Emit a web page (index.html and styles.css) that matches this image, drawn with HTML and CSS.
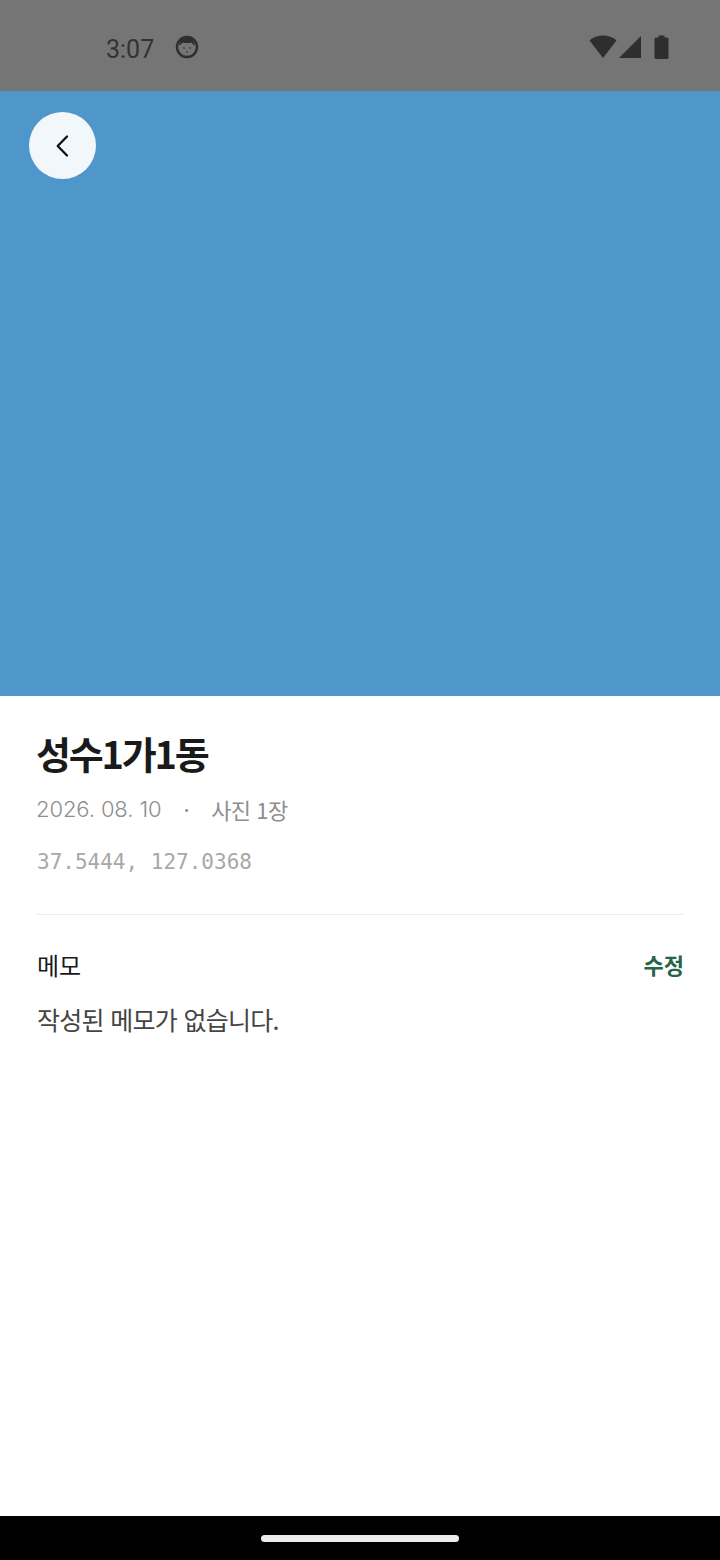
FILE: index.html
```html
<!DOCTYPE html>
<html lang="ko">
<head>
<meta charset="utf-8">
<title>성수1가1동</title>
<link rel="stylesheet" href="styles.css">
</head>
<body>
<div class="screen">
  <header class="status">
    <div class="status-left">
      <span class="clock">3:07</span>
      <svg class="app-icon" width="24" height="24" viewBox="0 0 24 24">
        <circle cx="12" cy="12" r="10" fill="none" stroke="#2e2e2e" stroke-width="2.4"/>
        <path d="M4 10.500C5 5 8 2.500 12 2.500s7 2.500 8 8c-2-.5-3-2.500-4-3-1 .7-7 .7-8 0-1 .5-2 2.500-4 3z" fill="#2e2e2e"/>
        <circle cx="9" cy="13" r="1" fill="#444"/>
        <circle cx="15" cy="13" r="1" fill="#444"/>
        <circle cx="12" cy="17" r="1" fill="#444"/>
      </svg>
    </div>
    <div class="status-right">
      <svg width="28" height="24" viewBox="0 0 28 24"><path d="M.5 5.500C4 2 9 .5 14 .5s10 1.500 13.500 5L14 23z" fill="#2e2e2e"/></svg>
      <svg width="24" height="24" viewBox="0 0 24 24"><path d="M1 23 23 1v22z" fill="#2e2e2e"/></svg>
      <svg class="battery" width="16" height="24" viewBox="0 0 16 24"><path d="M4.500 2.500V.5h6v2H13A1.500 1.500 0 0 1 14.500 4v18.500A1.500 1.500 0 0 1 13 24H2A1.500 1.500 0 0 1 .5 22.500V4A1.500 1.500 0 0 1 2 2.500z" fill="#2e2e2e"/></svg>
    </div>
  </header>

  <section class="hero">
    <button class="back" type="button" aria-label="뒤로">
      <svg width="24" height="24" viewBox="0 0 24 24"><path d="M16 2.500 6.700 12l9.300 9.500" fill="none" stroke="#111" stroke-width="2.300" stroke-linecap="round" stroke-linejoin="round"/></svg>
    </button>
  </section>

  <main class="detail">
    <h1 class="title">성수1가1동</h1>
    <div class="meta">
      <span class="date">2026. 08. 10</span>
      <span class="dot">·</span>
      <span>사진 1장</span>
    </div>
    <div class="coords">37.5444, 127.0368</div>
    <hr class="rule">
    <div class="memo-head">
      <span class="memo-label">메모</span>
      <span class="memo-edit">수정</span>
    </div>
    <p class="memo-body">작성된 메모가 없습니다.</p>
  </main>

  <footer class="nav">
    <div class="handle"></div>
  </footer>
</div>
</body>
</html>
```

FILE: styles.css
```css
* { box-sizing: border-box; }
html, body { margin: 0; padding: 0; }
body {
  width: 720px;
  height: 1560px;
  overflow: hidden;
  background: #fff;
  font-family: "Noto Sans CJK KR", "Noto Sans", sans-serif;
}
.screen {
  display: flex;
  flex-direction: column;
  height: 1560px;
}
.status {
  flex: 0 0 91px;
  background: #757575;
  display: flex;
  align-items: center;
  justify-content: space-between;
  padding: 3px 50px 0 106px;
}
.status-left, .status-right { display: flex; align-items: center; }
.status-left { gap: 21px; }
.status-right { gap: 1px; }
.clock {
  padding-top: 6px;
  font-family: Roboto, sans-serif;
  font-size: 25px;
  color: #333;
  line-height: 28px;
}
.battery { margin-left: 11px; }
.hero {
  flex: 0 0 605px;
  background: #4f96ca;
  padding: 21px 0 0 29px;
}
.back {
  display: flex;
  align-items: center;
  justify-content: center;
  width: 67px;
  height: 67px;
  padding: 0;
  border: 0;
  border-radius: 50%;
  background: #f2f7fb;
}
.detail {
  flex: 1;
  padding: 30px 36px 0;
}
.title {
  margin: 0;
  font-size: 38px;
  font-weight: 700;
  line-height: 54px;
  letter-spacing: -2.2px;
  color: #1a1a1a;
}
.meta {
  display: flex;
  align-items: center;
  margin-top: 13px;
  font-size: 22px;
  line-height: 32px;
  letter-spacing: -.5px;
  color: #8e8e8e;
}
.date {
  font-family: Inter, sans-serif;
  font-weight: 300;
  font-size: 22px;
  letter-spacing: -.1px;
}
.dot { margin: 0 22px; }
.coords {
  margin-top: 23px;
  padding-left: 1px;
  font-family: "DejaVu Sans Mono", monospace;
  font-size: 21px;
  line-height: 28px;
  color: #a8a8a8;
}
.rule {
  margin: 38px 0 0;
  border: 0;
  height: 1px;
  background: #ececec;
}
.memo-head {
  display: flex;
  align-items: center;
  justify-content: space-between;
  margin-top: 31px;
  padding-left: 1px;
  line-height: 34px;
}
.memo-label { padding-top: 2px; font-size: 24px; color: #1a1a1a; }
.memo-edit { font-size: 22px; font-weight: 700; color: #27634a; }
.memo-body {
  margin: 19px 0 0;
  padding-left: 1px;
  font-size: 25px;
  line-height: 36px;
  letter-spacing: -.7px;
  color: #444;
}
.nav {
  flex: 0 0 44px;
  background: #000;
  display: flex;
  justify-content: center;
  padding-top: 19px;
}
.handle {
  width: 198px;
  height: 7px;
  border-radius: 4px;
  background: #ececec;
}
```
